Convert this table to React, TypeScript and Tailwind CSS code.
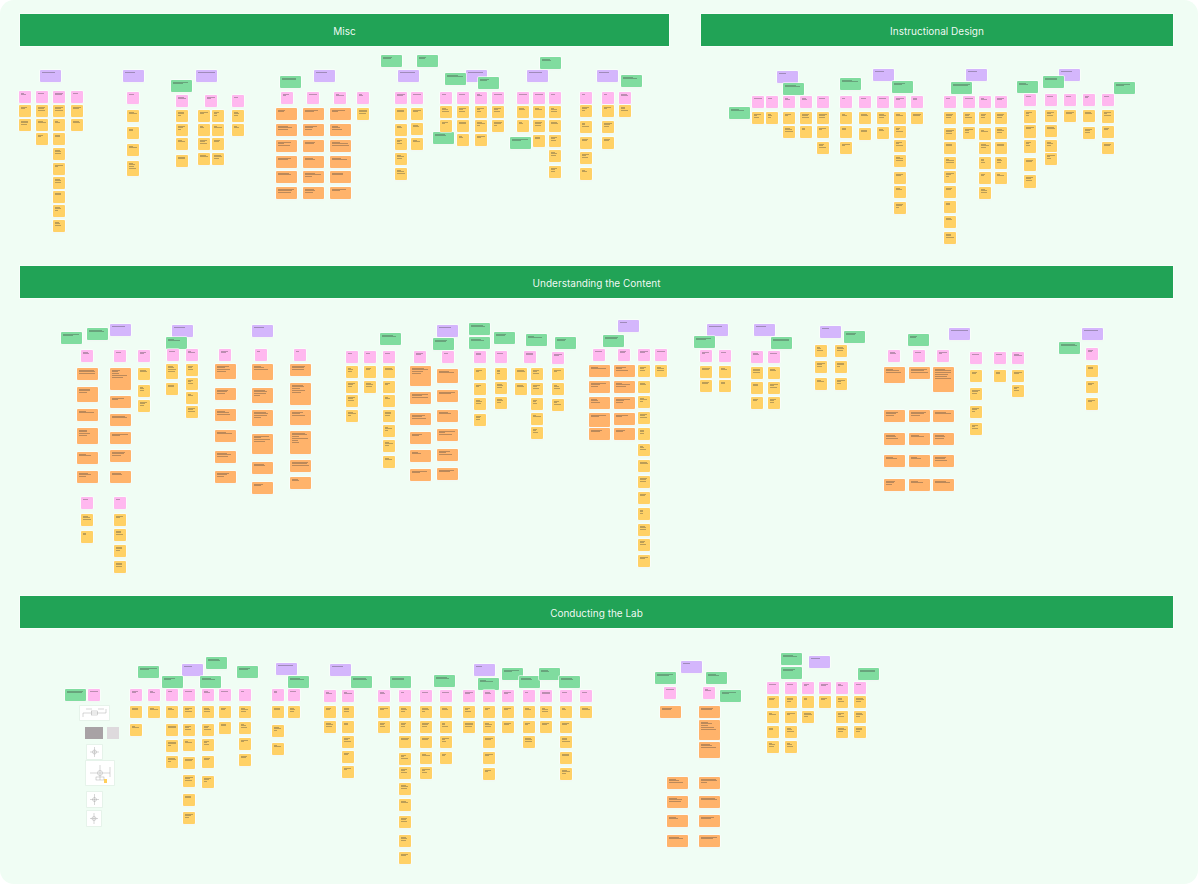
import React from "react";

type K = "p" | "y" | "o" | "v" | "g";
type N = { k: K; x: number; y: number; h?: number };
type YS = (number | [number, number])[];

const W: Record<K, number> = { p: 12, y: 12, o: 21, v: 21, g: 21 };
const BG: Record<K, string> = {
  p: "bg-[#ffb8ef]",
  y: "bg-[#ffd166]",
  o: "bg-[#ffb36b]",
  v: "bg-[#d4b6fc]",
  g: "bg-[#80dc9f]",
};

const col = (k: K, x: number, ys: YS): N[] =>
  ys.map((v) => (Array.isArray(v) ? { k, x, y: v[0], h: v[1] } : { k, x, y: v }));
const row = (k: K, y: number, xs: number[]): N[] => xs.map((x) => ({ k, x, y }));
const pts = (k: K, p: [number, number][]): N[] => p.map(([x, y]) => ({ k, x, y }));

const s1: N[] = [
  ...pts("v", [[40, 70], [123, 70], [196, 70], [314, 70], [398, 70], [466, 70], [527, 70], [597, 70], [777, 71], [873, 69], [966, 69], [1059, 69]]),
  ...pts("g", [[171, 80], [280, 76], [381, 55], [417, 55], [445, 73], [478, 77], [433, 132], [540, 57], [510, 137], [621, 75], [783, 83], [729, 107], [840, 78], [892, 81], [951, 82], [1017, 81], [1043, 76], [1114, 82]]),
  ...row("p", 91, [19, 36, 53, 71]),
  ...row("p", 92, [127, 281, 307, 334, 357, 395, 411, 440, 457, 475, 492, 517, 533, 549, 580, 602, 619]),
  ...row("p", 95, [176, 205, 232]),
  ...row("p", 96, [752, 766, 783, 800, 817, 840, 859, 877, 894, 911, 944, 963, 979, 995]),
  ...row("p", 94, [1024, 1045, 1064, 1083, 1102]),
  ...col("y", 19, [105, 119]),
  ...col("y", 36, [105, 119, 133]),
  ...col("y", 53, [105, 119, 133, 148, 163, 177, 191, 205, 220]),
  ...col("y", 71, [105, 119]),
  ...col("y", 127, [110, 127, 144, [161, 15]]),
  ...col("y", 176, [110, 124, 138, 155]),
  ...col("y", 198, [110, 124, 138, 153]),
  ...col("y", 212, [110, 124, 138, 153]),
  ...col("y", 232, [110, 124]),
  ...col("o", 276, [108, 124, 140, 156, 171, 187]),
  ...col("o", 303, [108, 124, 140, 156, 171, 187]),
  ...col("o", 330, [108, 124, 140, 156, 171, 187]),
  ...col("y", 357, [108]),
  ...col("y", 395, [108, 124, 138, 153, 168]),
  ...col("y", 411, [108, 123, 138]),
  ...col("y", 440, [106, 120]),
  ...col("y", 457, [106, 120, 134]),
  ...col("y", 475, [106, 120, 134]),
  ...col("y", 492, [106, 120]),
  ...col("y", 517, [106, 120]),
  ...col("y", 533, [106, 120, 135]),
  ...col("y", 549, [106, 120, 135, 150, 166]),
  ...col("y", 580, [105, 121, 137, 152, 168]),
  ...col("y", 602, [105, 121, 137]),
  ...col("y", 619, [105]),
  ...col("y", 752, [112]),
  ...col("y", 766, [112]),
  ...col("y", 783, [112, 126]),
  ...col("y", 800, [112, 126]),
  ...col("y", 817, [112, 126, 142]),
  ...col("y", 840, [112, 126, 142]),
  ...col("y", 859, [112, 128]),
  ...col("y", 877, [112, 127]),
  ...col("y", 894, [112, 126, 140, 155, 172, 186, 202]),
  ...col("y", 911, [112]),
  ...col("y", 944, [112, 128, 142, 157, 171, 186, 201, 216, 232]),
  ...col("y", 963, [112, 127]),
  ...col("y", 979, [112, 128, 142, 157, 172, 187]),
  ...col("y", 995, [112, 127, 142, 157, 172]),
  ...col("y", 1024, [[110, 13], [125, 13], [140, 13], [158, 13], [175, 13]]),
  ...col("y", 1045, [110, 125, 140, 153]),
  ...col("y", 1064, [110]),
  ...col("y", 1083, [110, 127]),
  ...col("y", 1102, [[110, 13], 126, 142]),
];

const s2: N[] = [
  ...pts("v", [[110, 324], [172, 325], [252, 325], [437, 325], [618, 320], [707, 324], [754, 324], [820, 326], [949, 328], [1082, 328]]),
  ...pts("g", [[61, 332], [87, 328], [166, 337], [380, 333], [433, 338], [469, 323], [469, 337], [494, 332], [526, 334], [555, 337], [603, 335], [694, 336], [771, 337], [844, 331], [908, 334], [1059, 342]]),
  ...row("p", 350, [81, 114, 138, 700, 719, 888, 913, 937]),
  ...row("p", 349, [167, 186, 219, 255, 294, 593, 618, 638, 655]),
  ...row("p", 351, [346, 364, 383, 414, 442, 474, 495, 524, 751, 768]),
  ...row("p", 352, [552, 970, 994, 1012]),
  ...row("p", 497, [81, 114]),
  ...pts("p", [[1086, 348]]),
  ...col("o", 77, [368, [387, 15], 409, [428, 16], 452, 471]),
  ...col("o", 110, [[368, 22], 396, 414, 432, 450, 471]),
  ...col("y", 138, [368, 385, 400]),
  ...col("y", 81, [514, 531]),
  ...col("y", 114, [514, 529, 545, 561]),
  ...col("y", 166, [[364, 15], 383]),
  ...col("y", 186, [364, 378, 392, 406]),
  ...col("o", 215, [[364, 15], 388, 409, 430, 451, 471]),
  ...col("o", 252, [[364, 16], [388, 15], [410, 16], [434, 20], 462, 482]),
  ...col("o", 290, [364, [383, 22], [410, 15], [431, 23], 460, 477]),
  ...col("y", 346, [366, 381, 395, 410]),
  ...col("y", 364, [366, 381]),
  ...col("y", 383, [366, 381, 395, 410, 425, 440, 456]),
  ...col("o", 410, [[366, 20], 392, 413, 432, 450, 469]),
  ...col("o", 437, [[369, 14], 390, 410, 429, 449, 468]),
  ...col("y", 474, [368, 383, 398, 414]),
  ...col("y", 495, [368, 382, 397]),
  ...col("y", 515, [368, 383]),
  ...col("y", 531, [368, 383, 398, 413, 427]),
  ...col("y", 552, [368, 383, 399]),
  ...col("o", 589, [365, 381, 397, [413, 14], 428]),
  ...col("o", 614, [365, 381, 397, 413, 428]),
  ...col("y", 638, [365, 381, 396, 412, 428, 444, 460, 476, 492, 508, 524, 539, 555]),
  ...col("y", 655, [365]),
  ...col("y", 700, [366, 380]),
  ...col("y", 719, [366, 380]),
  ...col("y", 751, [367, 382, 397]),
  ...col("y", 768, [367, 382, 397]),
  ...col("y", 815, [345, 361, 378]),
  ...col("y", 835, [345, 361, 378]),
  ...col("o", 884, [[367, 16], 410, 433, 455, 479]),
  ...col("o", 909, [367, 410, 433, 455, 479]),
  ...col("o", 933, [[367, 25], 410, 433, 455, 479]),
  ...col("y", 970, [370, 388, 406, 423]),
  ...col("y", 994, [370]),
  ...col("y", 1012, [370, 385]),
  ...col("y", 1086, [365, 381, 398]),
];

const s3: N[] = [
  ...pts("v", [[182, 664], [276, 663], [330, 664], [474, 664], [681, 661], [809, 656]]),
  ...pts("g", [[65, 689], [138, 666], [206, 657], [162, 676], [200, 676], [237, 666], [288, 676], [351, 676], [390, 676], [434, 675], [478, 678], [502, 668], [519, 676], [539, 668], [559, 676], [655, 672], [706, 672], [720, 690], [781, 653], [781, 667], [858, 668]]),
  ...pts("p", [[88, 689], [664, 687], [703, 687]]),
  ...row("p", 689, [130, 148, 166, 183, 202, 219, 239, 272, 288]),
  ...row("p", 690, [324, 342, 378, 399, 420, 440, 463, 483, 502, 523, 540, 560, 580]),
  ...row("p", 682, [767, 785, 802, 819, 836, 854]),
  ...col("y", 130, [706, 724]),
  ...col("y", 148, [706]),
  ...col("y", 166, [706, 724, 740, 756]),
  ...col("y", 183, [706, 724, 739, 757, 775, 794, 812]),
  ...col("y", 202, [706, 724, 739, 756, 776]),
  ...col("y", 219, [706, 722]),
  ...col("y", 239, [706, 722, 738, 754]),
  ...col("y", 272, [706, 725, 743]),
  ...col("y", 288, [706]),
  ...col("y", 324, [706, 721]),
  ...col("y", 342, [706, 721, 736, 751, 766]),
  ...col("y", 378, [706, 721]),
  ...col("y", 399, [706, 721, 736, 753, 767, 783, 799, 816, 835, 852]),
  ...col("y", 420, [706, 721, 736, 752, 767]),
  ...col("y", 440, [706, 721, 736, 752]),
  ...col("y", 463, [706, 721]),
  ...col("y", 483, [706, 721, 736, 752, 768]),
  ...col("y", 502, [706, 721]),
  ...col("y", 523, [706, 721, 736]),
  ...col("y", 540, [706, 721]),
  ...col("y", 560, [706, 721, 736, 752, 768]),
  ...col("y", 580, [706]),
  ...col("o", 660, [706]),
  ...col("o", 699, [706, [720, 20], [742, 16]]),
  ...col("o", 667, [777, 796, 815, 835]),
  ...col("o", 699, [777, 796, 815, 835]),
  ...col("y", 767, [696, 711, 726, 741]),
  ...col("y", 785, [696, 711, 726, 741]),
  ...col("y", 802, [696, 711]),
  ...col("y", 819, [696]),
  ...col("y", 836, [696, 711, 726]),
  ...col("y", 854, [696, 711, 726]),
];

const rnd = (a: number, b: number, i: number) => {
  const s = Math.sin(a * 12.9898 + b * 78.233 + i * 37.719) * 43758.5453;
  return s - Math.floor(s);
};

function Note({ n, ox, oy }: { n: N; ox: number; oy: number }) {
  const w = W[n.k];
  const h = n.h ?? 12;
  let count: number;
  if (n.k === "v") count = 1;
  else if (n.k === "g") count = 2;
  else if (n.k === "p") count = 1 + Math.floor(rnd(n.x, n.y, 9) * 2);
  else count = Math.max(2, Math.min(Math.floor((h - 3) / 2.6), 2 + Math.floor(rnd(n.x, n.y, 7) * 2) + Math.floor((h - 12) / 3)));
  const lines = Array.from({ length: count }, (_, i) => 35 + Math.round(rnd(n.x, n.y, i) * 60));
  return (
    <div
      className={`absolute flex flex-col gap-[1.2px] rounded-[1px] p-[1.6px] shadow-[0_0_0_0.8px_rgba(255,255,255,0.75),0_0.5px_1px_rgba(0,0,0,0.06)] ${BG[n.k]}`}
      style={{ left: n.x - ox, top: n.y - oy, width: w, height: h }}
    >
      {lines.map((p, i) => (
        <div key={i} className="h-[0.7px] shrink-0 bg-[#3b3b3b]/35" style={{ width: `${p}%` }} />
      ))}
    </div>
  );
}

function Canvas({ notes, top, className, children }: { notes: N[]; top: number; className: string; children?: React.ReactNode }) {
  return (
    <div className={`relative ${className}`}>
      {notes.map((n, i) => (
        <Note key={i} n={n} ox={20} oy={top} />
      ))}
      {children}
    </div>
  );
}

function Header({ title }: { title: string }) {
  return (
    <div className="flex h-[32px] items-center justify-center bg-[#21a356] pt-[2px] text-[10px] text-white/95 shadow-[0_0_0_1px_rgba(255,255,255,0.5)]">
      {title}
    </div>
  );
}

function Sketch({ x, y, w, h, variant }: { x: number; y: number; w: number; h: number; variant: number }) {
  return (
    <div
      className="absolute bg-white shadow-[0_0_0_0.8px_rgba(0,0,0,0.05)]"
      style={{ left: x - 20, top: y - 628, width: w, height: h }}
    >
      <svg width={w} height={h} viewBox={`0 0 ${w} ${h}`} fill="none" stroke="#9a9a9a" strokeWidth="0.4">
        {variant === 0 && (
          <>
            <path d={`M3 ${h / 2} H${w - 3} M3 ${h / 2} V${h - 3} M${w - 3} ${h / 2} V3`} />
            <rect x={w / 2 - 3} y={h / 2 - 2} width="6" height="4" />
            <path d={`M6 3 H12 M18 3 H24`} />
          </>
        )}
        {variant === 1 && (
          <>
            <path d={`M${w / 2} 2 V${h - 2} M3 ${h / 2} H${w - 3}`} />
            <circle cx={w / 2} cy={h / 2} r="2" />
          </>
        )}
        {variant === 2 && (
          <>
            <path d={`M4 ${h / 2} H${w - 4} M${w - 4} ${h / 2 - 6} V${h / 2 + 4} M${w / 2} 4 V${h - 5}`} />
            <circle cx={w / 2} cy={h / 2} r="2.5" />
            <rect x={w / 2 - 4} y={h - 8} width="8" height="3" />
          </>
        )}
      </svg>
      {variant === 2 && <div className="absolute bottom-[2px] right-[7px] h-[4px] w-[3px] bg-[#ffcf5a]" />}
    </div>
  );
}

export default function App() {
  return (
    <div
      className="flex h-[884px] w-full flex-col overflow-hidden rounded-[14px] bg-[#f0fdf4] pl-[20px] pr-[25px] pt-[14px]"
      style={{ fontFamily: "Inter, 'Noto Sans', sans-serif" }}
    >
      <div className="grid grid-cols-[649px_472px] gap-x-[32px]">
        <Header title="Misc" />
        <Header title="Instructional Design" />
      </div>
      <Canvas notes={s1} top={46} className="h-[220px] shrink-0" />
      <Header title="Understanding the Content" />
      <Canvas notes={s2} top={298} className="h-[298px] shrink-0" />
      <Header title="Conducting the Lab" />
      <Canvas notes={s3} top={628} className="flex-1">
        <Sketch x={80} y={706} w={29} h={14} variant={0} />
        <div className="absolute bg-[#a8a2a5]" style={{ left: 85 - 20, top: 727 - 628, width: 18, height: 12 }} />
        <div className="absolute bg-[#dedadd]" style={{ left: 107 - 20, top: 727 - 628, width: 12, height: 12 }} />
        <Sketch x={87} y={745} w={15} h={14} variant={1} />
        <Sketch x={86} y={761} w={28} h={24} variant={2} />
        <Sketch x={87} y={792} w={15} h={15} variant={1} />
        <Sketch x={87} y={811} w={14} h={15} variant={1} />
      </Canvas>
    </div>
  );
}
